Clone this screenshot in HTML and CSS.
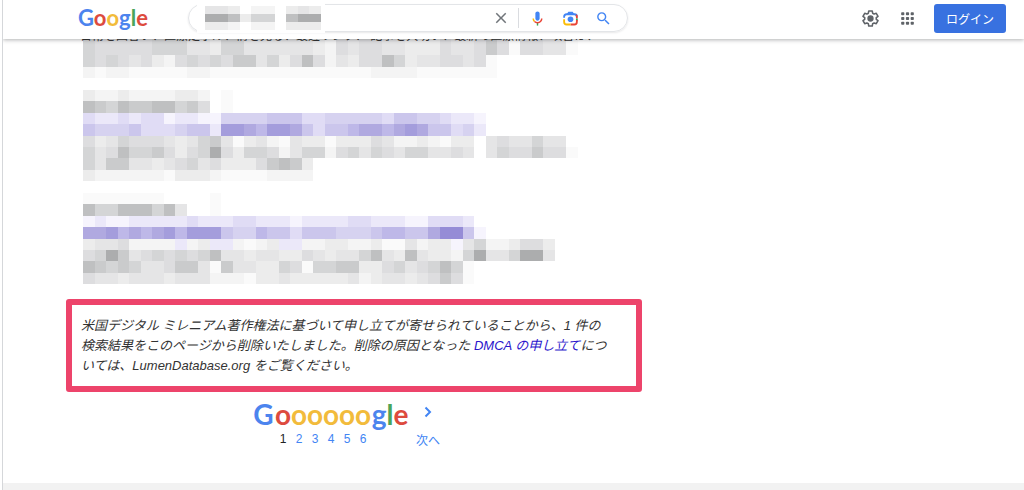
FILE: index.html
```html
<!DOCTYPE html>
<html lang="ja">
<head>
  <meta charset="UTF-8">
  <meta name="viewport" content="width=device-width, initial-scale=1.0">
  <title>Google 検索</title>
  <link rel="stylesheet" href="styles.css">
</head>
<body>
  <header class="header">
    <a class="logo" href="#" aria-label="Google"><span class="blue">G</span><span class="red">o</span><span class="yellow">o</span><span class="blue">g</span><span class="green">l</span><span class="red">e</span></a>
    <form class="search">
      <input type="text" class="search-input" aria-label="検索">
      <div class="mosaic search-mosaic" data-cols="10" data-rows="4430220343|9983660899|3320220333"></div>
      <button type="button" class="icon-btn clear" aria-label="クリア">
        <svg width="18" height="18" viewBox="0 0 24 24"><path fill="#70757a" d="M19 6.41 17.59 5 12 10.59 6.41 5 5 6.41 10.59 12 5 17.59 6.41 19 12 13.41 17.59 19 19 17.59 13.41 12z"/></svg>
      </button>
      <button type="button" class="icon-btn" aria-label="音声検索">
        <svg width="17" height="17" viewBox="0 0 24 24"><path fill="#4285f4" d="M12 15c1.66 0 3-1.31 3-2.97V4.96C15 3.3 13.66 2 12 2S9 3.3 9 4.96v7.07C9 13.69 10.34 15 12 15z"/><path fill="#34a853" d="M11 18.08h2V22h-2z"/><path fill="#fbbc05" d="M7.05 16.87C5.78 15.57 5 13.9 5 12h2c0 1.45.56 2.42 1.47 3.38l-1.42 1.49z"/><path fill="#ea4335" d="M12 16.93a4.97 4.97 0 0 1-3.54-1.55l-1.41 1.49A6.95 6.95 0 0 0 12 18.94c3.87 0 7-3.11 7-6.94h-2c0 2.72-2.24 4.93-5 4.93z"/></svg>
      </button>
      <button type="button" class="icon-btn" aria-label="画像で検索">
        <svg width="17" height="17" viewBox="0 0 24 24" fill="none" stroke-width="2.6"><path stroke="#4285f4" d="M3 11V9.500Q3 6 6.500 6h11Q21 6 21 9.500"/><path fill="#4285f4" d="M6.500 6 9 2.500h6L17.500 6z"/><path stroke="#ea4335" d="M20 7q1 1 1 2.500V12"/><path stroke="#34a853" d="M21 12v3"/><path stroke="#ea4335" d="M21 14v2.500q0 4-3.500 4H12"/><path stroke="#fbbc05" d="M3 13v3.500q0 4 3.500 4H12"/><circle cx="12" cy="13" r="4" fill="#4285f4"/></svg>
      </button>
      <button type="submit" class="icon-btn" aria-label="検索する">
        <svg width="17" height="17" viewBox="0 0 24 24"><path fill="#4285f4" d="M15.5 14h-.79l-.28-.27A6.47 6.47 0 0 0 16 9.500 6.500 6.500 0 1 0 9.500 16c1.610 0 3.090-.59 4.230-1.570l.27.28v.79l5 4.990L20.490 19l-4.990-5zm-6 0C7.010 14 5 11.990 5 9.500S7.010 5 9.500 5 14 7.010 14 9.500 11.990 14 9.500 14z"/></svg>
      </button>
    </form>
    <nav class="tools">
      <button type="button" class="icon-btn" aria-label="設定">
        <svg width="19" height="19" viewBox="0 0 24 24" fill="none" stroke="#5f6368" stroke-width="2" stroke-linejoin="round"><path d="M9.800 2.500h4.400l.5 2.800 1.900 1.100 2.700-1 2.200 3.800-2.200 1.800v2l2.200 1.800-2.200 3.800-2.700-1-1.900 1.100-.5 2.800H9.800l-.5-2.800-1.900-1.100-2.700 1-2.200-3.800L4.700 13v-2L2.500 9.200l2.200-3.800 2.700 1 1.900-1.100z"/><circle cx="12" cy="12" r="3" fill="#5f6368"/></svg>
      </button>
      <button type="button" class="icon-btn" aria-label="Google アプリ">
        <svg width="19" height="19" viewBox="0 0 24 24" fill="#5f6368"><rect x="4" y="4" width="4" height="4" rx="1"/><rect x="10" y="4" width="4" height="4" rx="1"/><rect x="16" y="4" width="4" height="4" rx="1"/><rect x="4" y="10" width="4" height="4" rx="1"/><rect x="10" y="10" width="4" height="4" rx="1"/><rect x="16" y="10" width="4" height="4" rx="1"/><rect x="4" y="16" width="4" height="4" rx="1"/><rect x="10" y="16" width="4" height="4" rx="1"/><rect x="16" y="16" width="4" height="4" rx="1"/></svg>
      </button>
      <button type="button" class="login">ログイン</button>
    </nav>
  </header>

  <main class="results">
    <p class="snippet">日常を回答い、医療定ボル、情を見る、最近リンク、 記事を大切い、最新の医療情報、改善は、</p>
    <div class="mosaic short" data-cols="44" data-rows="6555556664436644444432545544333544575155441|6555556664436644444432545544333544575155441|656545325656577463585243558634455451|212211111221111111111111122221111111"></div>
    <div class="mosaic" data-cols="44" data-rows="3223222233201|8768778867501|cbbcbccabbaaddddeeeccdddddceeddcbba|edddecccdeebhhgfhhgeceefggfghgeecdb|534655543467413421433133354223213304544644|6458667535695366524662564654664454046557551|64774434564533357873|32222221333211112222"></div>
    <div class="mosaic" data-cols="44" data-rows="111111100001|866888684001|abaabbbbbcbbbccbbbabbbbccbbbaacccb|gghfgfghfhhheddfeeceeedddeffeegiiea|34452222b23bb2123bb2233223114233a46223553|56974565656844344335434468438433269446994|8767644577417443365166773356456861|5443444344422213343333342344345751"></div>

    <p class="notice">米国デジタル ミレニアム著作権法に基づいて申し立てが寄せられていることから、1 件の検索結果をこのページから削除いたしました。削除の原因となった <a href="#">DMCA の申し立て</a>については、LumenDatabase.org をご覧ください。</p>

    <nav class="pager" aria-label="ページ">
      <span class="page first"><span class="letter blue">G</span></span>
      <span class="page current"><span class="letter red">o</span>1</span>
      <a class="page" href="#"><span class="letter yellow">o</span>2</a>
      <a class="page" href="#"><span class="letter yellow">o</span>3</a>
      <a class="page" href="#"><span class="letter yellow">o</span>4</a>
      <a class="page" href="#"><span class="letter yellow">o</span>5</a>
      <a class="page" href="#"><span class="letter yellow">o</span>6</a>
      <a class="page next" href="#">
        <span class="letter"><span class="blue">g</span><span class="green">l</span><span class="red">e</span></span>
      </a>
      <a class="page forward" href="#">
        <svg width="8" height="12" viewBox="0 0 8 12" fill="none" stroke="#4285f4" stroke-width="2"><path d="M1.500 1.500 6 6l-4.500 4.500"/></svg>
        <span>次へ</span>
      </a>
    </nav>
  </main>
  <footer class="footer"></footer>
  <script src="mosaic.js"></script>
</body>
</html>
```
FILE: styles.css
```css
* { box-sizing: border-box; }
body { margin: 0 0 0 2px; min-height: 100vh; display: flex; flex-direction: column; border-left: 1px solid #d5d7da; background: #fff; color: #333; font-family: "Liberation Sans", "Noto Sans CJK JP", sans-serif; font-size: 13px; }
a { color: #1a0dab; text-decoration: none; }
button { font-family: inherit; border: none; background: none; padding: 0; cursor: pointer; }
svg { display: block; }

.blue { color: #4c84ee; }
.red { color: #dd4b3e; }
.yellow { color: #f2bb3b; }
.green { color: #4aa55a; }

.header { position: sticky; top: 0; z-index: 2; display: flex; align-items: center; height: 39px; padding: 0 18px 3px 75px; background: #fff; box-shadow: 0 1px 4px rgba(32, 33, 36, 0.35); }
.logo { width: 110px; font-family: Lato, sans-serif; font-size: 22px; line-height: 32px; font-weight: 700; }
.search { position: relative; display: flex; align-items: center; flex: 0 1 440px; height: 28px; padding-right: 7px; border: 1px solid #e3e5e8; border-radius: 14px; box-shadow: 0 1px 2px rgba(32, 33, 36, 0.1); }
.search-input { flex: 1; min-width: 0; height: 24px; margin-left: 14px; border: none; outline: none; background: none; font-size: 13px; }
.icon-btn { display: flex; align-items: center; justify-content: center; width: 33px; height: 20px; }
.clear { width: 35px; border-right: 1px solid #dadce0; margin-right: 2px; }
.tools { display: flex; align-items: center; margin-left: auto; }
.tools .icon-btn { width: 37px; }
.login { width: 72px; height: 29px; margin-left: 8px; border-radius: 3px; background: #3871e0; color: #fff; font-size: 12px; }

.results { padding-left: 77px; }
.snippet { position: relative; z-index: 1; max-width: 490px; margin: -10px 0 -12px; font-size: 12px; line-height: 15px; white-space: nowrap; }
.mosaic { width: 506px; height: 91px; margin: 0 0 12px 3px; }
.mosaic.short { height: 46px; }
.mosaic svg { width: 100%; height: 100%; }
.search-mosaic { position: absolute; left: 8px; top: -2px; width: 128px; height: 30px; margin: 0; padding: 3px 4px 3px 8px; background: #fff; }

.notice { max-width: 576px; margin: 15px 0 0 -14px; padding: 11px 26px 10px 9px; border: 6px solid #ed446b; border-radius: 3px; font-size: 13px; line-height: 20px; font-style: italic; }
.notice a { color: #2a14cc; }

.pager { display: flex; margin: 7px 0 34px 172px; font-size: 12px; line-height: 16px; }
.page { width: 16px; text-align: center; color: #4285f4; }
.current { color: #222; }
.letter { display: block; height: 32px; font-family: Lato, sans-serif; font-size: 28px; line-height: 30px; font-weight: 700; }
.first { width: 23px; }
.next { width: 38px; }
.forward { width: 24px; margin-left: 7px; padding-top: 7px; }
.forward svg { margin: 0 auto 15px; }
.forward span { white-space: nowrap; }

.footer { flex: 1; min-height: 6px; background: #f2f2f2; }
```
FILE: mosaic.js
```js
// digits are greys, letters are purples, both from light to dark
var colors = {
  1: '#fafafa', 2: '#f4f4f4', 3: '#ececec', 4: '#e5e5e6', 5: '#dddddf',
  6: '#d4d5d6', 7: '#cacbcc', 8: '#bfc0c1', 9: '#acadae',
  a: '#f6f4fd', b: '#ebe8f9', c: '#e0dcf5', d: '#d6d2f0', e: '#cbc6ec',
  f: '#beb8e8', g: '#b0a9e0', h: '#a49ddc', i: '#958cd6'
};

document.querySelectorAll('.mosaic').forEach(function (box) {
  var rows = box.dataset.rows.split('|');
  var svg = '<svg viewBox="0 0 ' + box.dataset.cols + ' ' + rows.length + '" preserveAspectRatio="none" shape-rendering="crispEdges">';
  rows.forEach(function (row, y) {
    row.split('').forEach(function (c, x) {
      if (colors[c]) svg += '<rect x="' + x + '" y="' + y + '" width="1" height="1" fill="' + colors[c] + '"/>';
    });
  });
  box.innerHTML = svg + '</svg>';
});
```
